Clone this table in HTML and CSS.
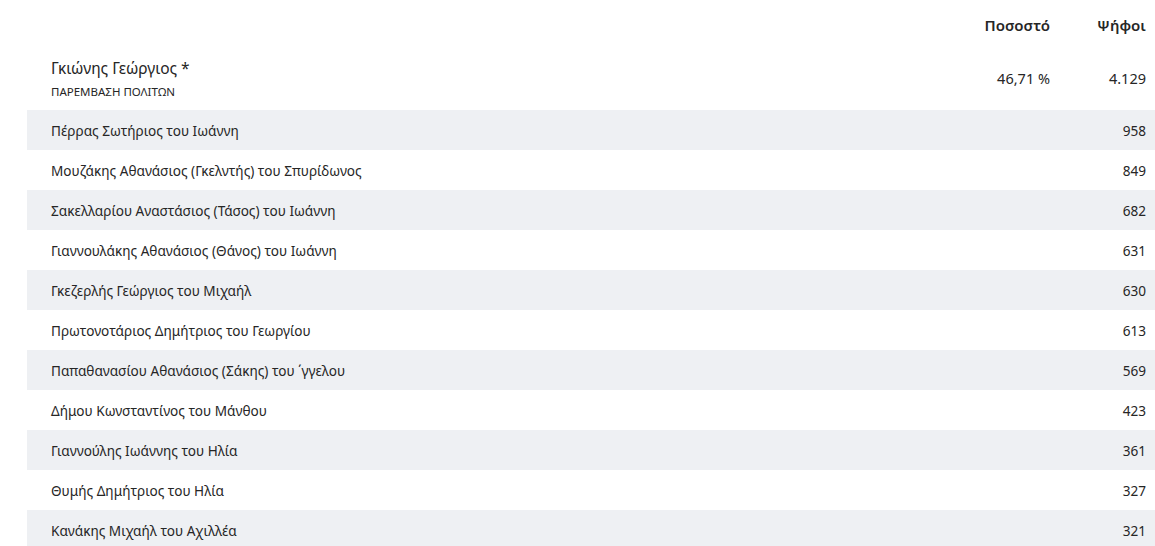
FILE: index.html
```html
<!DOCTYPE html>
<html lang="el">
<head>
<meta charset="utf-8">
<title>Αποτελέσματα</title>
<link rel="stylesheet" href="styles.css">
</head>
<body>
<div class="results">
  <div class="head">
    <div class="c-name"></div>
    <div class="c-pct">Ποσοστό</div>
    <div class="c-votes">Ψήφοι</div>
  </div>
  <div class="lead">
    <div class="c-name">
      <div class="lead-name">Γκιώνης Γεώργιος *</div>
      <div class="party">ΠΑΡΕΜΒΑΣΗ ΠΟΛΙΤΩΝ</div>
    </div>
    <div class="c-pct">46,71 %</div>
    <div class="c-votes">4.129</div>
  </div>
  <div class="row"><div class="c-name">Πέρρας Σωτήριος του Ιωάννη</div><div class="c-pct"></div><div class="c-votes">958</div></div>
  <div class="row"><div class="c-name">Μουζάκης Αθανάσιος (Γκελντής) του Σπυρίδωνος</div><div class="c-pct"></div><div class="c-votes">849</div></div>
  <div class="row"><div class="c-name">Σακελλαρίου Αναστάσιος (Τάσος) του Ιωάννη</div><div class="c-pct"></div><div class="c-votes">682</div></div>
  <div class="row"><div class="c-name">Γιαννουλάκης Αθανάσιος (Θάνος) του Ιωάννη</div><div class="c-pct"></div><div class="c-votes">631</div></div>
  <div class="row"><div class="c-name">Γκεζερλής Γεώργιος του Μιχαήλ</div><div class="c-pct"></div><div class="c-votes">630</div></div>
  <div class="row"><div class="c-name">Πρωτονοτάριος Δημήτριος του Γεωργίου</div><div class="c-pct"></div><div class="c-votes">613</div></div>
  <div class="row"><div class="c-name">Παπαθανασίου Αθανάσιος (Σάκης) του ΄γγελου</div><div class="c-pct"></div><div class="c-votes">569</div></div>
  <div class="row"><div class="c-name">Δήμου Κωνσταντίνος του Μάνθου</div><div class="c-pct"></div><div class="c-votes">423</div></div>
  <div class="row"><div class="c-name">Γιαννούλης Ιωάννης του Ηλία</div><div class="c-pct"></div><div class="c-votes">361</div></div>
  <div class="row"><div class="c-name">Θυμής Δημήτριος του Ηλία</div><div class="c-pct"></div><div class="c-votes">327</div></div>
  <div class="row"><div class="c-name">Κανάκης Μιχαήλ του Αχιλλέα</div><div class="c-pct"></div><div class="c-votes">321</div></div>
</div>
</body>
</html>
```
FILE: styles.css
```css
html, body {
  margin: 0;
  padding: 0;
  background: #fff;
}
body {
  font-family: "Noto Sans", "Open Sans", sans-serif;
  color: #262626;
  font-size: 13.6px;
  overflow: hidden;
}
.results {
  margin-left: 27px;
}
.head, .lead, .row {
  display: grid;
  grid-template-columns: 1fr 120px 105px;
  align-items: center;
}
.c-name {
  padding-left: 24px;
}
.c-pct, .c-votes {
  text-align: right;
}
.c-votes {
  padding-right: 9px;
}
.head {
  height: 52px;
  font-size: 15px;
  font-weight: 600;
  padding-bottom: 2px;
  box-sizing: border-box;
}
.lead {
  height: 58px;
  align-items: start;
}
.lead .c-name {
  padding-top: 6px;
}
.lead .c-pct, .lead .c-votes {
  font-size: 14.5px;
  line-height: 20px;
  padding-top: 16px;
}
.lead-name {
  font-size: 15.5px;
  line-height: 20px;
}
.party {
  font-size: 11.5px;
  line-height: 15px;
  margin-top: 6px;
}
.row {
  height: 40px;
}
.row:nth-child(odd) {
  background: #eef0f3;
}
```
